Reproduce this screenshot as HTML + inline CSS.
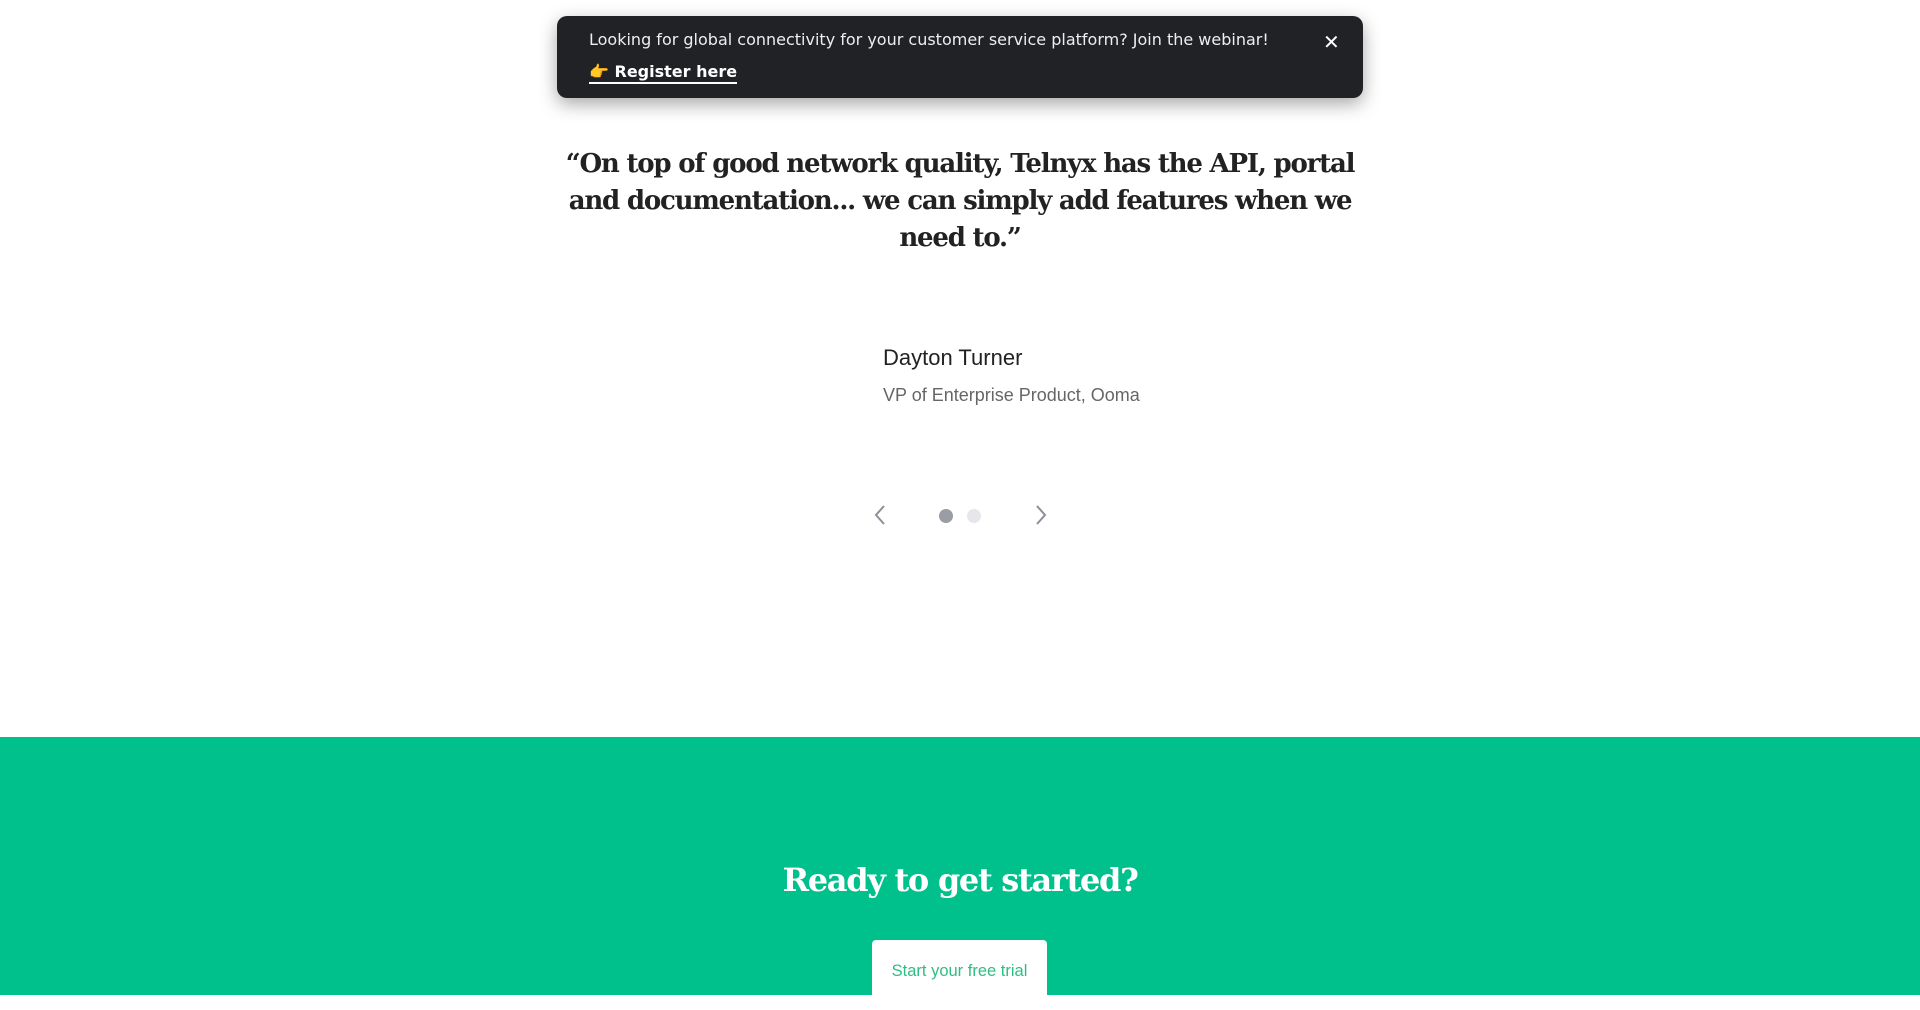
<!DOCTYPE html>
<html><head><meta charset="utf-8"><style>
*{margin:0;padding:0;box-sizing:border-box}
body{width:1920px;height:995px;overflow:hidden;background:#fff;font-family:"Liberation Sans",sans-serif;position:relative}
.banner{position:absolute;left:557px;top:16px;width:806px;height:82px;background:#212226;border-radius:10px;box-shadow:0 6px 18px rgba(0,0,0,.35);color:#fff;font-family:"DejaVu Sans",sans-serif}
.banner .t{position:absolute;left:32px;top:14px;font-size:16px;color:#eee}
.banner .r{position:absolute;left:32px;top:46px;font-size:16px;font-weight:bold;border-bottom:2px solid #fff;line-height:20px}
.banner .x{position:absolute;left:766px;top:14px;font-size:20px}
.quote{position:absolute;left:460px;width:1000px;top:146px;text-align:center;font-family:"DejaVu Serif",serif;font-weight:bold;font-size:26px;line-height:37px;color:#222;letter-spacing:-1.2px;white-space:nowrap}
.name{position:absolute;left:883px;top:345px;font-size:22px;color:#222}
.role{position:absolute;left:883px;top:385px;font-size:18px;color:#666}
.dot{position:absolute;top:509px;width:14px;height:14px;border-radius:50%}
.green{position:absolute;left:0;top:737px;width:1920px;height:258px;background:#00c08b}
.green h2{position:absolute;width:100%;top:124px;text-align:center;color:#fff;font-family:"DejaVu Serif",serif;font-weight:bold;font-size:32px;letter-spacing:-1.3px}
.btn{position:absolute;left:872px;top:203px;width:175px;height:70px;background:#fff;border-radius:4px;color:#2fbd83;font-size:16.5px;text-align:center;line-height:62px}
</style></head><body>
<div class="banner"><div class="t">Looking for global connectivity for your customer service platform? Join the webinar!</div><div class="r"><span style="color:#f5c33b">👉</span> Register here</div><div class="x">✕</div></div>
<div class="quote">“On top of good network quality, Telnyx has the API, portal<br>and documentation... we can simply add features when we<br>need to.”</div>
<div class="name">Dayton Turner</div>
<div class="role">VP of Enterprise Product, Ooma</div>
<svg style="position:absolute;left:870px;top:503px" width="20" height="24"><path d="M14 3 L6 12 L14 21" stroke="#8a8f98" stroke-width="2" fill="none"/></svg>
<svg style="position:absolute;left:1031px;top:503px" width="20" height="24"><path d="M6 3 L14 12 L6 21" stroke="#8a8f98" stroke-width="2" fill="none"/></svg>
<div class="dot" style="left:939px;background:#9a9ea4"></div>
<div class="dot" style="left:967px;background:#e5e7eb"></div>
<div class="green"><h2>Ready to get started?</h2><div class="btn">Start your free trial</div></div>
</body></html>
